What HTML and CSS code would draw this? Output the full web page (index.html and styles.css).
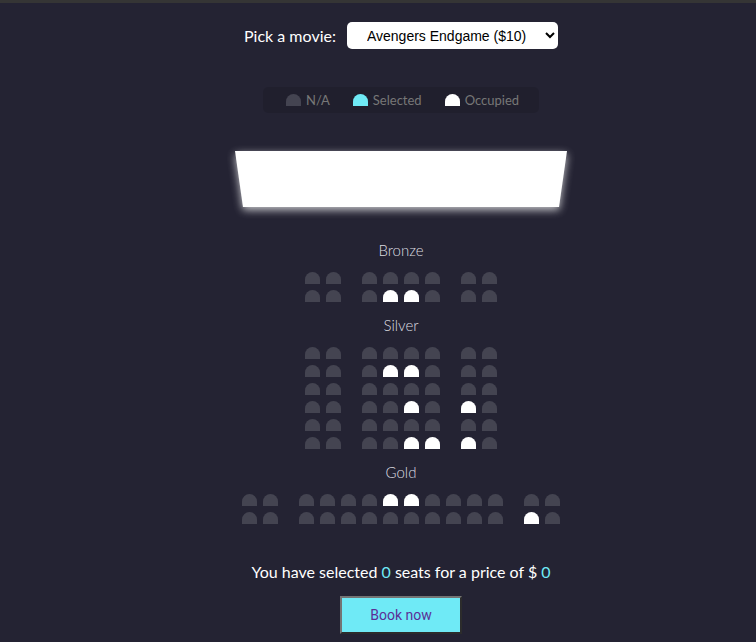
FILE: index.html
```html
<!DOCTYPE html>
<html lang="en">
<head>
<meta charset="utf-8">
<title>Movie Seat Booking</title>
<link rel="stylesheet" href="styles.css">
</head>
<body>
<div class="topbar"></div>
<div class="page">
  <div class="movie-container">
    <label class="movie-label">Pick a movie:</label>
    <select class="movie-select">
      <option>Avengers Endgame ($10)</option>
      <option>Joker ($12)</option>
      <option>Toy Story 4 ($8)</option>
      <option>The Lion King ($9)</option>
    </select>
  </div>

  <ul class="showcase">
    <li><div class="seat"></div><small>N/A</small></li>
    <li><div class="seat selected"></div><small>Selected</small></li>
    <li><div class="seat occupied"></div><small>Occupied</small></li>
  </ul>

  <div class="screen-glow"><div class="screen"></div></div>

  <section class="tier">
    <h3 class="tier-name">Bronze</h3>
    <div class="rows">
      <div class="row"><div class="seat"></div><div class="seat"></div><div class="seat"></div><div class="seat"></div><div class="seat"></div><div class="seat"></div><div class="seat"></div><div class="seat"></div></div>
      <div class="row"><div class="seat"></div><div class="seat"></div><div class="seat"></div><div class="seat occupied"></div><div class="seat occupied"></div><div class="seat"></div><div class="seat"></div><div class="seat"></div></div>
    </div>
  </section>

  <section class="tier">
    <h3 class="tier-name">Silver</h3>
    <div class="rows">
      <div class="row"><div class="seat"></div><div class="seat"></div><div class="seat"></div><div class="seat"></div><div class="seat"></div><div class="seat"></div><div class="seat"></div><div class="seat"></div></div>
      <div class="row"><div class="seat"></div><div class="seat"></div><div class="seat"></div><div class="seat occupied"></div><div class="seat occupied"></div><div class="seat"></div><div class="seat"></div><div class="seat"></div></div>
      <div class="row"><div class="seat"></div><div class="seat"></div><div class="seat"></div><div class="seat"></div><div class="seat"></div><div class="seat"></div><div class="seat"></div><div class="seat"></div></div>
      <div class="row"><div class="seat"></div><div class="seat"></div><div class="seat"></div><div class="seat"></div><div class="seat occupied"></div><div class="seat"></div><div class="seat occupied"></div><div class="seat"></div></div>
      <div class="row"><div class="seat"></div><div class="seat"></div><div class="seat"></div><div class="seat"></div><div class="seat"></div><div class="seat"></div><div class="seat"></div><div class="seat"></div></div>
      <div class="row"><div class="seat"></div><div class="seat"></div><div class="seat"></div><div class="seat"></div><div class="seat occupied"></div><div class="seat occupied"></div><div class="seat occupied"></div><div class="seat"></div></div>
    </div>
  </section>

  <section class="tier">
    <h3 class="tier-name">Gold</h3>
    <div class="rows">
      <div class="row"><div class="seat"></div><div class="seat"></div><div class="seat"></div><div class="seat"></div><div class="seat"></div><div class="seat"></div><div class="seat occupied"></div><div class="seat occupied"></div><div class="seat"></div><div class="seat"></div><div class="seat"></div><div class="seat"></div><div class="seat"></div><div class="seat"></div></div>
      <div class="row"><div class="seat"></div><div class="seat"></div><div class="seat"></div><div class="seat"></div><div class="seat"></div><div class="seat"></div><div class="seat"></div><div class="seat"></div><div class="seat"></div><div class="seat"></div><div class="seat"></div><div class="seat"></div><div class="seat occupied"></div><div class="seat"></div></div>
    </div>
  </section>

  <p class="text">You have selected <span class="num">0</span> seats for a price of $ <span class="num">0</span></p>

  <button class="book-btn">Book now</button>
</div>
</body>
</html>
```

FILE: styles.css
```css
* { box-sizing: border-box; }

html, body {
  margin: 0;
  padding: 0;
  overflow: hidden;
}

body {
  background-color: #242333;
  color: #fff;
  font-family: "Lato", "Liberation Sans", sans-serif;
  height: 642px;
}

.topbar {
  height: 3px;
  background-color: #353535;
}

.page {
  padding-left: 46px;
  display: flex;
  flex-direction: column;
  align-items: center;
}

.movie-container {
  display: flex;
  align-items: center;
  margin-top: 19px;
  font-size: 16px;
}

.movie-label {
  line-height: 19px;
}

.movie-select {
  margin-left: 11px;
  background-color: #fff;
  color: #000;
  border: 0;
  border-radius: 5px;
  font-family: "Liberation Sans", Arial, sans-serif;
  font-size: 14px;
  height: 27px;
  width: 211px;
  padding: 0 6px 0 16px;
}

.showcase {
  display: flex;
  justify-content: space-between;
  list-style-type: none;
  margin: 38px 0 0;
  padding: 4px 10px;
  background: rgba(0, 0, 0, 0.1);
  border-radius: 5px;
  color: #777;
}

.showcase li {
  display: flex;
  align-items: center;
  margin: 0 10px;
}

.showcase small {
  font-size: 13px;
  margin-left: 2px;
}

.seat {
  background-color: #444451;
  width: 15px;
  height: 12px;
  margin: 3px;
  border-top-left-radius: 10px;
  border-top-right-radius: 10px;
}

.seat.selected { background-color: #6feaf6; }
.seat.occupied { background-color: #fff; }

.screen-glow {
  margin-top: 38px;
  filter: drop-shadow(0 3px 4px rgba(255, 255, 255, 0.75));
}

.screen {
  width: 332px;
  height: 56px;
  background-color: #fff;
  clip-path: polygon(0 0, 100% 0, 97.6% 100%, 2.4% 100%);
}

.tier {
  display: flex;
  flex-direction: column;
  align-items: center;
}

.tier-name {
  margin: 0;
  font-size: 15px;
  font-weight: 300;
  line-height: 18px;
  color: #dcdce0;
}

.tier:nth-of-type(1) { margin-top: 34px; }
.tier:nth-of-type(2) { margin-top: 11px; }
.tier:nth-of-type(3) { margin-top: 11px; }

.rows {
  margin-top: 10px;
}

.row {
  display: flex;
  justify-content: center;
}

.row .seat:nth-of-type(2) { margin-right: 18px; }
.row .seat:nth-last-of-type(2) { margin-left: 18px; }

.text {
  margin: 35px 0 0;
  font-size: 16px;
  line-height: 19px;
}

.num { color: #6feaf6; }

.book-btn {
  margin-top: 15px;
  width: 122px;
  height: 38px;
  background-color: #6feaf6;
  border: 2px solid;
  border-color: #747474 #2c2c2c #2c2c2c #747474;
  color: #5b2f96;
  font-family: "Roboto", "Liberation Sans", sans-serif;
  font-size: 14px;
  padding: 0;
}
```
